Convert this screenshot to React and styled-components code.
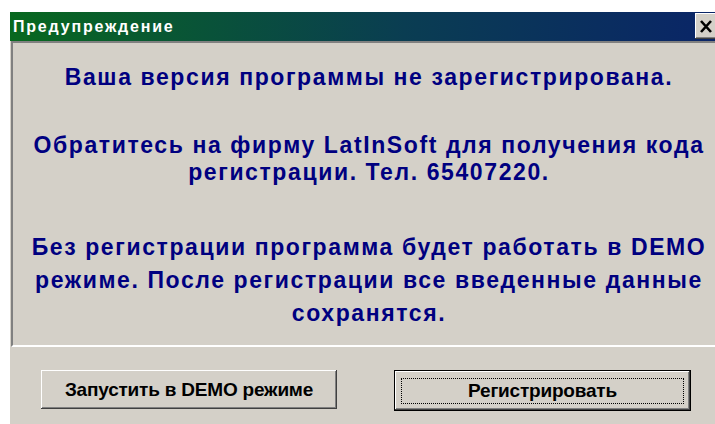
import React from "react";
import styled, { createGlobalStyle } from "styled-components";

const GlobalStyle = createGlobalStyle`
  html, body {
    margin: 0;
    padding: 0;
    background: #ffffff;
    overflow: hidden;
  }
  body {
    width: 715px;
    height: 424px;
  }
`;

const Window = styled.div`
  margin: 12px 0 0 10px;
  width: 717px;
  height: 420px;
  background: #d4d0c8;
  display: flex;
  flex-direction: column;
`;

const TitleBar = styled.div`
  height: 29px;
  display: flex;
  align-items: center;
  padding-left: 3px;
  background: linear-gradient(90deg, #08681f 0%, #0a3d52 55%, #0a2468 100%);
`;

const Title = styled.span`
  color: #ffffff;
  font-family: "Liberation Sans", Arial, sans-serif;
  font-weight: bold;
  font-size: 16px;
  letter-spacing: 1.8px;
`;

const CloseButton = styled.div`
  margin-left: auto;
  margin-right: 2px;
  align-self: flex-start;
  width: 30px;
  height: 26px;
  margin-top: 1px;
  box-sizing: border-box;
  background: #d4d0c8;
  box-shadow: inset -1px -1px #404040, inset 1px 1px #ffffff,
    inset -2px -2px #808080;
  display: flex;
  align-items: center;
  padding-left: 4px;
`;

const Panel = styled.div`
  margin-left: 1px;
  height: 306px;
  box-sizing: border-box;
  border-top: 2px solid #808080;
  border-left: 2px solid #808080;
  border-bottom: 2px solid #ffffff;
  border-right: 2px solid #ffffff;
  padding-top: 18px;
  display: flex;
  flex-direction: column;
  align-items: center;
`;

const Message = styled.p`
  margin: ${(p) => p.top}px 0 0;
  color: #000080;
  font-family: "Liberation Sans", Arial, sans-serif;
  font-weight: bold;
  font-size: 23px;
  line-height: ${(p) => p.lh}px;
  letter-spacing: 1.6px;
  text-align: center;
  white-space: nowrap;
`;

const ButtonRow = styled.div`
  display: flex;
  gap: 57px;
  padding: 23px 0 0 31px;
`;

const Button = styled.div`
  width: ${(p) => p.w}px;
  height: ${(p) => p.h}px;
  box-sizing: border-box;
  background: #d4d0c8;
  display: flex;
  align-items: center;
  justify-content: center;
  font-family: "Liberation Sans", Arial, sans-serif;
  font-weight: bold;
  font-size: 19px;
  letter-spacing: -0.2px;
  color: #000000;
  box-shadow: inset -1px -1px #404040, inset 1px 1px #ffffff,
    inset -2px -2px #808080, inset 2px 2px #d4d0c8;
`;

const DefaultButton = styled(Button)`
  border: 1px solid #000000;
  padding: 7px 6px 6px 6px;
`;

const FocusRing = styled.span`
  flex: 1;
  align-self: stretch;
  display: flex;
  align-items: center;
  justify-content: center;
  border: 1px dotted #000000;
`;

export default function App() {
  return (
    <>
      <GlobalStyle />
      <Window>
        <TitleBar>
          <Title>Предупреждение</Title>
          <CloseButton>
            <svg width="14" height="13" viewBox="0 0 14 13">
              <path d="M2 1 L12 12 M12 1 L2 12" stroke="#000" strokeWidth="2.6" />
            </svg>
          </CloseButton>
        </TitleBar>
        <Panel>
          <Message lh={32} top={0}>Ваша версия программы не зарегистрирована.</Message>
          <Message lh={27} top={39}>
            Обратитесь на фирму LatInSoft для получения кода
            <br />
            регистрации. Тел. 65407220.
          </Message>
          <Message lh={33} top={45}>
            Без регистрации программа будет работать в DEMO
            <br />
            режиме. После регистрации все введенные данные
            <br />
            сохранятся.
          </Message>
        </Panel>
        <ButtonRow>
          <Button w={296} h={39}>Запустить в DEMO режиме</Button>
          <DefaultButton w={297} h={41}>
            <FocusRing>Регистрировать</FocusRing>
          </DefaultButton>
        </ButtonRow>
      </Window>
    </>
  );
}
